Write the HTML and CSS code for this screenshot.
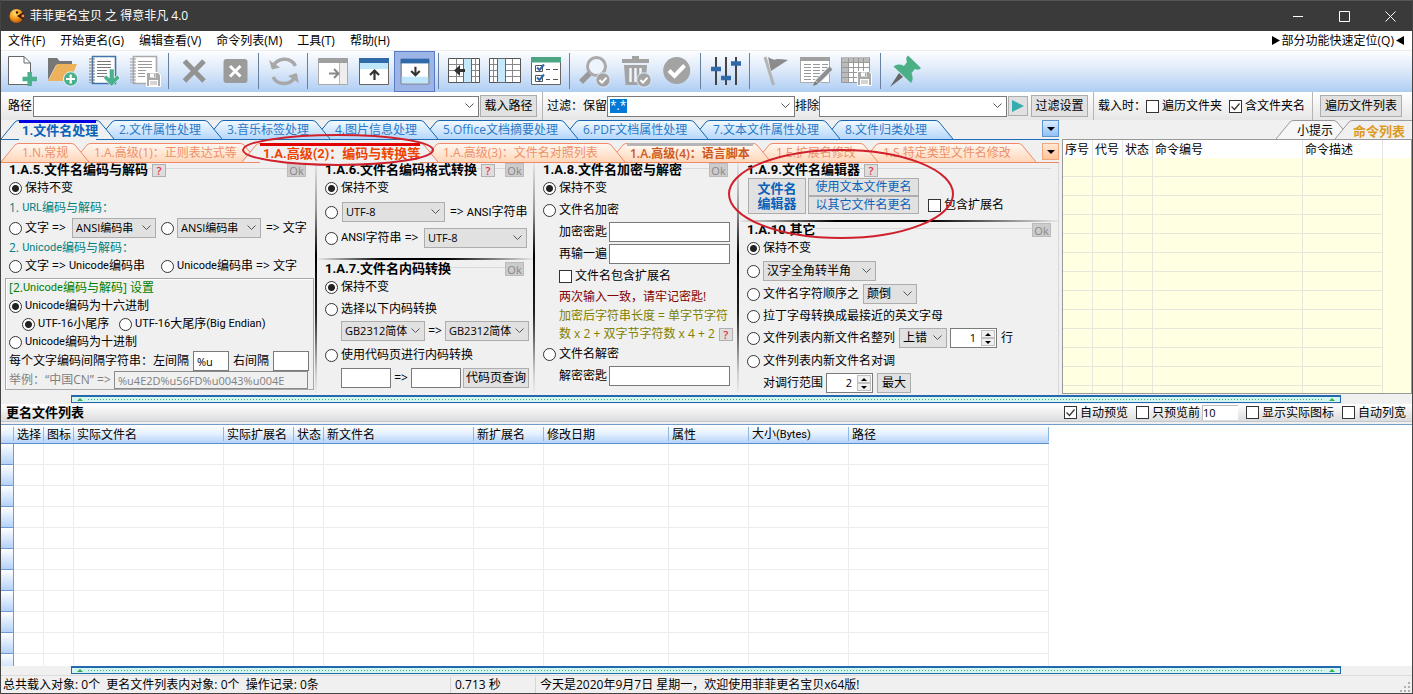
FILE: index.html
```html
<!DOCTYPE html>
<html lang="zh-CN">
<head>
<meta charset="utf-8">
<title>菲菲更名宝贝 之 得意非凡 4.0</title>
<link rel="stylesheet" href="styles.css">
</head>
<body>
<svg class="defs" aria-hidden="true">
  <defs>
    <linearGradient id="g-blue" x1="0" y1="0" x2="0" y2="1"><stop offset="0" stop-color="#f4faff"/><stop offset="1" stop-color="#b5d6fb"/></linearGradient>
    <linearGradient id="g-orange" x1="0" y1="0" x2="0" y2="1"><stop offset="0" stop-color="#fff8f2"/><stop offset="1" stop-color="#ffd6b8"/></linearGradient>
    <radialGradient id="g-ball" cx=".4" cy=".3" r=".8"><stop offset="0" stop-color="#ffe27a"/><stop offset=".5" stop-color="#f59a1c"/><stop offset="1" stop-color="#a84404"/></radialGradient>
    <symbol id="tab-l" viewBox="0 0 18 19"><path stroke="none" d="M0 19L14 2Q15.500 .5 18 .5V19Z"/><path fill="none" d="M0 19L14 2Q15.500 .5 18 .5"/></symbol>
    <symbol id="tab-r" viewBox="0 0 18 19"><path stroke="none" d="M0 .5Q2.500 .5 4 2L18 19H0Z"/><path fill="none" d="M0 .5Q2.500 .5 4 2L18 19"/></symbol>
    <symbol id="floppy" viewBox="0 0 15 15"><path fill="#a9a9a9" stroke="#fff" d="M.5 .5H12L14.500 3V14.500H.5Z"/><path fill="#fff" d="M4 1.500h6v4H4zM3 8h9v6H3z"/><path fill="#a9a9a9" d="M8 2h1.500v3H8zM4 9.500h7v1H4zM4 11.500h7v1H4z"/></symbol>
    <symbol id="badge" viewBox="0 0 16 16"><circle cx="8" cy="8" r="7.200" fill="#a3a3a3" stroke="#dce9f8"/><path fill="none" stroke="#fff" stroke-width="2" d="M4.500 8l2.500 2.600 4.500-5"/></symbol>
  </defs>
</svg>

<header class="titlebar">
  <svg class="logo" viewBox="0 0 16 16" width="16" height="16"><circle cx="7.500" cy="8" r="7" fill="url(#g-ball)"/><path fill="#3a1a06" d="M8 8L14.500 4V12Z"/><circle cx="8" cy="4.500" r="1.200" fill="#301000"/><circle cx="13.800" cy="8" r="1.400" fill="#ff8a4a"/></svg>
  <h1 class="app-name">菲菲更名宝贝 之 得意非凡 4.0</h1>
  <button class="winbtn" aria-label="最小化"><svg width="11" height="11"><path d="M0 5.500H10"/></svg></button>
  <button class="winbtn" aria-label="最大化"><svg width="11" height="11"><path d="M.5 .5H10.500V10.500H.5Z"/></svg></button>
  <button class="winbtn" aria-label="关闭"><svg width="11" height="11"><path d="M.5 .5L10.500 10.500M10.500 .5L.5 10.500"/></svg></button>
</header>

<nav class="menu">
  <button>文件(F)</button><button>开始更名(G)</button><button>编辑查看(V)</button><button>命令列表(M)</button><button>工具(T)</button><button>帮助(H)</button>
  <button class="quick"><svg width="8" height="9"><path d="M0 0L8 4.500L0 9Z"/></svg>部分功能快速定位(Q)<svg width="8" height="9"><path d="M8 0L0 4.500L8 9Z"/></svg></button>
</nav>

<div class="toolbar">
  <button aria-label="新建"><svg viewBox="0 0 41 41"><path fill="#fff" stroke="#666" d="M7.500 5.500H23L29.500 12V33.500H7.500Z"/><path fill="none" stroke="#666" d="M23 5.500V12H29.500"/><path stroke="#4cb08c" stroke-width="4.500" d="M28.700 21V35M21.500 28H36"/></svg></button>
  <button aria-label="打开"><svg viewBox="0 0 41 41"><path fill="#777" d="M6 7H15L17.500 10H30V14H14L6 29Z"/><path fill="#eeb25c" d="M15 13H35L28 30H6Z"/><circle cx="28.700" cy="28" r="7.200" fill="#4cb08c" stroke="#e8f2fc"/><path stroke="#fff" stroke-width="2.200" d="M28.700 23.500V32.500M24 28H33"/></svg></button>
  <button aria-label="载入列表"><svg viewBox="0 0 41 41"><path fill="#fff" stroke="#3f74ad" stroke-width="1.600" d="M9.500 5.500H32.500V32.500H9.500Z"/><path stroke="#777" d="M14 10.500H28M14 13.500H28M14 16.500H28M14 19.500H24M14 22.500H24M14 25.500H24"/><path stroke="#777" stroke-dasharray="1 2" stroke-width="6" d="M9 7.500V32"/><path fill="#4cb08c" stroke="#fff" stroke-width=".6" d="M26.300 18H31.200V27L34.200 24L37 27L28.700 35.500L20.500 27L23.200 24L26.300 27Z"/></svg></button>
  <button aria-label="保存列表"><svg viewBox="0 0 41 41"><path fill="#fff" stroke="#aaa" stroke-width="1.600" d="M9.500 5.500H32.500V32.500H9.500Z"/><path stroke="#999" d="M14 10.500H28M14 13.500H28M14 16.500H28M14 19.500H22M14 22.500H21M14 25.500H21"/><path stroke="#999" stroke-dasharray="1 2" stroke-width="6" d="M9 7.500V32"/><use href="#floppy" x="22" y="21" width="15" height="15"/></svg></button>
  <i class="sep"></i>
  <button aria-label="移除"><svg viewBox="0 0 41 41"><path stroke="#939393" stroke-width="5" d="M11.500 10L31 30M31 10L11.500 30"/></svg></button>
  <button aria-label="清空"><svg viewBox="0 0 41 41"><rect x="9.500" y="8" width="24" height="24" rx="3" fill="#9b9b9b"/><path stroke="#fff" stroke-width="3" d="M16 15L26.500 25.500M26.500 15L16 25.500"/></svg></button>
  <i class="sep"></i>
  <button aria-label="刷新"><svg viewBox="0 0 41 41"><g fill="none" stroke="#a8a8a8" stroke-width="3.500"><path d="M9.500 17A12.500 12.500 0 0 1 32.500 15"/><path d="M33 23.500A12.500 12.500 0 0 1 10 26"/></g><path fill="#a8a8a8" d="M6 9L9 18.500L17 16.500ZM36 32L33.500 22L25 25Z"/></svg></button>
  <i class="sep"></i>
  <button aria-label="右侧栏"><svg viewBox="0 0 41 41"><path fill="#fff" stroke="#aaa" d="M6.500 8H35.500V33.500H6.500Z"/><path fill="#a0a0a0" d="M6 7H36V12H6Z"/><path fill="#eee" d="M28 12H35V33H28Z"/><path stroke="#bbb" d="M27.500 12V33"/><path fill="none" stroke="#888" stroke-width="2" d="M17 22.500H26M22 18L26.500 22.500L22 27"/></svg></button>
  <button aria-label="上方栏"><svg viewBox="0 0 41 41"><path fill="#fff" stroke="#666" d="M6.500 8H35.500V33.500H6.500Z"/><path fill="#2f69a8" d="M6 7H36V12H6Z"/><path fill="#bfe6fb" d="M7 12H35V18H7Z"/><path fill="none" stroke="#333" stroke-width="2.200" d="M21.500 29V20M17 24L21.500 19.500L26 24"/></svg></button>
  <button class="on" aria-label="下方栏"><svg viewBox="0 0 41 41"><path fill="#fff" stroke="#666" d="M6.500 8H35.500V33.500H6.500Z"/><path fill="#2f69a8" d="M6 7H36V12H6Z"/><path fill="#bfe6fb" d="M7 26H35V33H7Z"/><path fill="none" stroke="#333" stroke-width="2.200" d="M21.500 15.500V24M17 20L21.500 24.500L26 20"/></svg></button>
  <i class="sep"></i>
  <button aria-label="插入列"><svg viewBox="0 0 41 41"><path fill="#fff" stroke="#555" d="M5.500 7.500H36.500V31.500H5.500Z"/><path stroke="#888" d="M6 13.500H36M6 19.500H36M6 25.500H36M13.500 8V31M32.500 8V31"/><path fill="#c6e8fb" stroke="#666" d="M20.500 7.500H28.500V31.500H20.500Z"/><path fill="#333" d="M11 19.500L17 14V18H22V21H17V25Z"/></svg></button>
  <button aria-label="列设置"><svg viewBox="0 0 41 41"><path fill="#fff" stroke="#555" d="M5.500 7.500H36.500V31.500H5.500Z"/><path stroke="#888" d="M6 13.500H36M6 19.500H36M6 25.500H36M9.500 8V31M28.500 8V31"/><path fill="#c6e8fb" stroke="#666" d="M13.500 7.500H21.500V31.500H13.500Z"/></svg></button>
  <button aria-label="选项清单"><svg viewBox="0 0 41 41"><path fill="#fff" stroke="#666" d="M6.500 7H35.500V33.500H6.500Z"/><path fill="#4ba583" d="M6 6H36V11.500H6Z"/><path fill="none" stroke="#555" d="M10.500 14.500H17.500V20.500H10.500ZM10.500 24.500H17.500V30.500H10.500ZM21 18.500H25M28 18.500H33M21 28.500H25M28 28.500H33" /><path fill="none" stroke="#2f69a8" stroke-width="2" d="M12 16.500L14.500 19L19 13.500M12 26.500L14.500 29L19 23.500"/></svg></button>
  <i class="sep"></i>
  <button aria-label="查找"><svg viewBox="0 0 41 41"><path stroke="#999" stroke-width="5.500" d="M16 22L7 31"/><circle cx="22.500" cy="15.500" r="9" fill="#eef4fc" stroke="#aaa" stroke-width="3"/><use href="#badge" x="21" y="21" width="16" height="16"/></svg></button>
  <button aria-label="清理"><svg viewBox="0 0 41 41"><path fill="#a3a3a3" d="M7 8H17V5H24V8H34V12H7ZM9 14H32L30.500 34H10.500Z"/><path stroke="#eef4fc" stroke-width="2.500" d="M15.500 17V31M20.500 17V31M25.500 17V31"/><use href="#badge" x="21" y="21" width="16" height="16"/></svg></button>
  <button aria-label="执行"><svg viewBox="0 0 41 41"><circle cx="20.700" cy="19.500" r="13.500" fill="#a3a3a3"/><path fill="none" stroke="#fff" stroke-width="4" d="M13 19.500L18.500 25L28.500 14.500"/></svg></button>
  <i class="sep"></i>
  <button aria-label="参数"><svg viewBox="0 0 41 41"><path stroke="#444" stroke-width="2" d="M11 6V34M21 6V34M31 6V34"/><path stroke="#2f69a8" stroke-width="4.500" d="M6 18H16M16 27H26M26 12.500H36"/></svg></button>
  <i class="sep"></i>
  <button aria-label="标记"><svg viewBox="0 0 41 41"><path fill="#8b8b8b" d="M14 6Q20 10 23 8Q29 8 34 9L17 20Z"/><path stroke="#b4b4b4" stroke-width="3" d="M11 6L19.500 34"/></svg></button>
  <button aria-label="编辑列表"><svg viewBox="0 0 41 41"><path fill="#fff" stroke="#aaa" d="M5.500 6.500H34.500V31.500H5.500Z"/><path fill="#a0a0a0" d="M5 6H35V10H5Z"/><path stroke="#999" stroke-dasharray="7 2" d="M9 13.500H33M9 16.500H33M9 19.500H33M9 22.500H33M9 25.500H24M9 28.500H20"/><path stroke="#dfeaf8" stroke-width="6" d="M35 18L22 31"/><path stroke="#8f8f8f" stroke-width="4" d="M36 17L22 31"/><path fill="#777" d="M20 30L23 33L18 35Z"/></svg></button>
  <button aria-label="保存表格"><svg viewBox="0 0 41 41"><path fill="#fff" stroke="#999" d="M5.500 6.500H33.500V31.500H5.500Z"/><path fill="#bbb" d="M6 6H33V11H12V31H6Z"/><path stroke="#999" d="M6 11.500H33M6 16.500H33M6 21.500H33M6 26.500H33M12.500 7V31M17.500 7V31M22.500 7V31M27.500 7V31"/><use href="#floppy" x="21" y="20" width="15" height="15"/></svg></button>
  <i class="sep"></i>
  <button aria-label="置顶"><svg viewBox="0 0 41 41"><path fill="#666" d="M14 22L18 26L5 36Z"/><path fill="#4cb086" d="M23 4.500L36 17Q34 20 30 18L26.500 22Q29 28 26 32L8.500 15.500Q13 12 19 15L22 11Q20 7 23 4.500Z"/></svg></button>
</div>

<div class="pathbar">
  <label for="path">路径</label>
  <div class="combo combo-path"><input id="path" type="text"><button aria-label="展开路径"></button></div>
  <button class="btn">载入路径</button>
  <i class="vsep"></i>
  <label for="keep">过滤：保留</label>
  <div class="combo combo-f"><mark>*.*</mark><input id="keep" type="text"><button aria-label="展开保留"></button></div>
  <label for="drop">排除</label>
  <div class="combo combo-f"><input id="drop" type="text"><button aria-label="展开排除"></button></div>
  <button class="btn play" aria-label="应用过滤"><svg width="12" height="12"><path fill="#35acb0" d="M0 0L12 6L0 12Z"/></svg></button>
  <button class="btn">过滤设置</button>
  <i class="vsep"></i>
  <span>载入时：</span>
  <label><input type="checkbox">遍历文件夹</label>
  <label class="second"><input type="checkbox" checked>含文件夹名</label>
  <i class="vsep"></i>
  <button class="btn">遍历文件列表</button>
</div>

<main class="main">
  <section class="work">
    <div class="strip blue">
      <div class="tabs tabs-main">
        <button class="tab sel"><svg><use href="#tab-l"/></svg><span>1.文件名处理</span><svg><use href="#tab-r"/></svg></button>
        <button class="tab"><svg><use href="#tab-l"/></svg><span>2.文件属性处理</span><svg><use href="#tab-r"/></svg></button>
        <button class="tab"><svg><use href="#tab-l"/></svg><span>3.音乐标签处理</span><svg><use href="#tab-r"/></svg></button>
        <button class="tab"><svg><use href="#tab-l"/></svg><span>4.图片信息处理</span><svg><use href="#tab-r"/></svg></button>
        <button class="tab"><svg><use href="#tab-l"/></svg><span>5.Office文档摘要处理</span><svg><use href="#tab-r"/></svg></button>
        <button class="tab"><svg><use href="#tab-l"/></svg><span>6.PDF文档属性处理</span><svg><use href="#tab-r"/></svg></button>
        <button class="tab"><svg><use href="#tab-l"/></svg><span>7.文本文件属性处理</span><svg><use href="#tab-r"/></svg></button>
        <button class="tab"><svg><use href="#tab-l"/></svg><span>8.文件归类处理</span><svg><use href="#tab-r"/></svg></button>
      </div>
      <button class="more" aria-label="更多标签"></button>
    </div>
    <div class="strip orange">
      <div class="tabs tabs-sub">
        <button class="tab"><svg><use href="#tab-l"/></svg><span>1.N.常规</span><svg><use href="#tab-r"/></svg></button>
        <button class="tab"><svg><use href="#tab-l"/></svg><span>1.A.高级(1)：正则表达式等</span><svg><use href="#tab-r"/></svg></button>
        <button class="tab sel"><svg><use href="#tab-l"/></svg><span>1.A.高级(2)：编码与转换等</span><svg><use href="#tab-r"/></svg></button>
        <button class="tab"><svg><use href="#tab-l"/></svg><span>1.A.高级(3)：文件名对照列表</span><svg><use href="#tab-r"/></svg></button>
        <button class="tab script"><svg><use href="#tab-l"/></svg><span>1.A.高级(4)：语言脚本</span><svg><use href="#tab-r"/></svg></button>
        <button class="tab"><svg><use href="#tab-l"/></svg><span>1.E.扩展名修改</span><svg><use href="#tab-r"/></svg></button>
        <button class="tab"><svg><use href="#tab-l"/></svg><span>1.S.特定类型文件名修改</span><svg><use href="#tab-r"/></svg></button>
      </div>
      <button class="more" aria-label="更多子标签"></button>
    </div>

    <div class="panels">
      <div class="col ruled">
        <div class="head"><h2>1.A.5.文件名编码与解码</h2><button class="help">?</button><button class="ok" disabled>Ok</button></div>
        <div class="row r22"><label><input type="radio" name="a5" checked>保持不变</label></div>
        <div class="row r18 teal">1.&nbsp;<span class="lat">URL</span>编码与解码：</div>
        <div class="row r22"><label class="w63"><input type="radio" name="a5">文字 =&gt;</label><select class="w84" aria-label="编码为"><option>ANSI编码串</option></select><label class="gap5"><input type="radio" name="a5" aria-label="解码自"></label><select class="w84" aria-label="解码自格式"><option>ANSI编码串</option></select><span class="gap5">=&gt; 文字</span></div>
        <div class="row r18 teal">2.&nbsp;<span class="lat">Unicode</span>编码与解码：</div>
        <div class="row r18"><label class="w152"><input type="radio" name="a5">文字 =&gt;&nbsp;<span class="lat">Unicode</span>编码串</label><label><input type="radio" name="a5"><span class="lat">Unicode</span>编码串 =&gt; 文字</label></div>
        <div class="setbox">
          <div class="row r18 green">[2.<span class="lat">Unicode</span>编码与解码] 设置</div>
          <div class="row r18"><label><input type="radio" name="base" checked><span class="lat">Unicode</span>编码为十六进制</label></div>
          <div class="row r18 in"><label class="w97"><input type="radio" name="end" checked><span class="lat">UTF-16</span>小尾序</label><label><input type="radio" name="end"><span class="lat">UTF-16</span>大尾序<span class="lat">(Big Endian)</span></label></div>
          <div class="row r18"><label><input type="radio" name="base"><span class="lat">Unicode</span>编码为十进制</label></div>
          <div class="row r20"><label for="lsep">每个文字编码间隔字符串：左间隔</label><input class="txt w36 gap4" id="lsep" type="text" value="%u"><label class="gap4" for="rsep">右间隔</label><input class="txt w36 gap4" id="rsep" type="text"></div>
          <div class="row r18 gray"><label class="w105" for="demo">举例：“中国CN” =&gt;</label><input class="txt demo" id="demo" type="text" value="%u4E2D%u56FD%u0043%u004E" disabled></div>
        </div>
      </div>

      <div class="col ruled">
        <div class="head"><h2>1.A.6.文件名编码格式转换</h2><button class="help">?</button><button class="ok" disabled>Ok</button></div>
        <div class="row r22"><label><input type="radio" name="a6" checked>保持不变</label></div>
        <div class="row r26"><label class="w17"><input type="radio" name="a6" aria-label="转为ANSI"></label><select class="w103" aria-label="源编码"><option>UTF-8</option></select><span class="gap5">=&gt; <span class="lat">ANSI</span>字符串</span></div>
        <div class="row r26"><label class="w99"><input type="radio" name="a6"><span class="lat">ANSI</span>字符串 =&gt;</label><select class="w103" aria-label="目标编码"><option>UTF-8</option></select></div>
        <hr class="rule">
        <div class="head"><h2>1.A.7.文件名内码转换</h2><button class="ok" disabled>Ok</button></div>
        <div class="row r22"><label><input type="radio" name="a7" checked>保持不变</label></div>
        <div class="row r22"><label><input type="radio" name="a7">选择以下内码转换</label></div>
        <div class="row r22 in"><select class="w84" aria-label="源内码"><option>GB2312简体</option></select><span class="arrow">=&gt;</span><select class="w84" aria-label="目标内码"><option>GB2312简体</option></select></div>
        <div class="row r26"><label><input type="radio" name="a7">使用代码页进行内码转换</label></div>
        <div class="row r20 in"><input class="txt w50" type="text" aria-label="源代码页"><span class="arrow">=&gt;</span><input class="txt w50" type="text" aria-label="目标代码页"><button class="btn small">代码页查询</button></div>
      </div>

      <div class="col ruled">
        <div class="head"><h2>1.A.8.文件名加密与解密</h2><button class="ok" disabled>Ok</button></div>
        <div class="row r22"><label><input type="radio" name="a8" checked>保持不变</label></div>
        <div class="row r22"><label><input type="radio" name="a8">文件名加密</label></div>
        <div class="row r22 in"><label class="w50" for="key1">加密密匙</label><input class="txt w121" id="key1" type="text"></div>
        <div class="row r22 in"><label class="w50" for="key2">再输一遍</label><input class="txt w121" id="key2" type="text"></div>
        <div class="row r22 in"><label><input type="checkbox">文件名包含扩展名</label></div>
        <div class="row r20 in red">两次输入一致，请牢记密匙!</div>
        <div class="row r18 in olive">加密后字符串长度 = 单字节字符</div>
        <div class="row r18 in olive">数 x 2 + 双字节字符数 x 4 + 2<button class="help">?</button></div>
        <div class="row r22"><label><input type="radio" name="a8">文件名解密</label></div>
        <div class="row r22 in"><label class="w50" for="key3">解密密匙</label><input class="txt w121" id="key3" type="text"></div>
      </div>

      <div class="col last">
        <div class="head"><h2>1.A.9.文件名编辑器</h2><button class="help">?</button></div>
        <div class="editor">
          <button class="btn big">文件名<br>编辑器</button>
          <div class="stack"><button class="btn link">使用文本文件更名</button><button class="btn link">以其它文件名更名</button></div>
          <label class="ext"><input type="checkbox">包含扩展名</label>
        </div>
        <hr class="rule">
        <div class="head"><h2>1.A.10.其它</h2><button class="ok" disabled>Ok</button></div>
        <div class="row r22"><label><input type="radio" name="a10" checked>保持不变</label></div>
        <div class="row r24"><label class="w16"><input type="radio" name="a10" aria-label="全半角转换"></label><select class="w113 wide" aria-label="全半角"><option>汉字全角转半角</option></select></div>
        <div class="row r22"><label><input type="radio" name="a10">文件名字符顺序之</label><select class="w54 wide gap4" aria-label="顺序"><option>颠倒</option></select></div>
        <div class="row r22"><label><input type="radio" name="a10">拉丁字母转换成最接近的英文字母</label></div>
        <div class="row r22"><label><input type="radio" name="a10">文件列表内新文件名整列</label><select class="w48 wide gap4" aria-label="方向"><option>上错</option></select><span class="spin"><input type="text" value="1" aria-label="行数"><span><button aria-label="增加"></button><button aria-label="减少"></button></span></span><span class="gap4">行</span></div>
        <div class="row r24"><label><input type="radio" name="a10">文件列表内新文件名对调</label></div>
        <div class="row r20 in"><label for="range">对调行范围</label><span class="spin"><input id="range" type="text" value="2"><span><button aria-label="增加"></button><button aria-label="减少"></button></span></span><button class="btn small max gap4">最大</button></div>
      </div>
    </div>
  </section>

  <aside class="cmds">
    <div class="ctabs">
      <button class="tab"><svg><use href="#tab-l"/></svg><span>小提示</span><svg class="end"><use href="#tab-r"/></svg></button>
      <button class="tab cur"><svg><use href="#tab-l"/></svg><span>命令列表</span></button>
    </div>
    <div class="cbox">
      <table class="ctable">
        <thead><tr><th class="c30">序号</th><th class="c30">代号</th><th class="c30">状态</th><th class="c150">命令编号</th><th class="c80">命令描述</th></tr></thead>
        <tbody>
          <tr><td></td><td></td><td></td><td></td><td></td></tr><tr><td></td><td></td><td></td><td></td><td></td></tr><tr><td></td><td></td><td></td><td></td><td></td></tr><tr><td></td><td></td><td></td><td></td><td></td></tr><tr><td></td><td></td><td></td><td></td><td></td></tr><tr><td></td><td></td><td></td><td></td><td></td></tr><tr><td></td><td></td><td></td><td></td><td></td></tr><tr><td></td><td></td><td></td><td></td><td></td></tr><tr><td></td><td></td><td></td><td></td><td></td></tr><tr><td></td><td></td><td></td><td></td><td></td></tr><tr><td></td><td></td><td></td><td></td><td></td></tr><tr><td></td><td></td><td></td><td></td><td></td></tr><tr><td></td><td></td><td></td><td></td><td></td></tr>
        </tbody>
      </table>
    </div>
  </aside>
</main>

<div class="splitter"><i></i><b></b><i></i></div>

<div class="listbar">
  <h2>更名文件列表</h2>
  <label><input type="checkbox" checked>自动预览</label>
  <label><input type="checkbox">只预览前</label><input class="count" type="text" value="10" aria-label="预览数量">
  <label><input type="checkbox">显示实际图标</label>
  <label><input type="checkbox">自动列宽</label>
</div>

<div class="files">
  <table class="ftable">
    <thead><tr><th class="f14"></th><th class="c30">选择</th><th class="c30">图标</th><th class="c150">实际文件名</th><th class="f70">实际扩展名</th><th class="c30">状态</th><th class="c150">新文件名</th><th class="f70">新扩展名</th><th class="f125">修改日期</th><th class="c80">属性</th><th class="f100">大小<span class="lat">(Bytes)</span></th><th class="f200">路径</th></tr></thead>
    <tbody>
      <tr><th></th><td></td><td></td><td></td><td></td><td></td><td></td><td></td><td></td><td></td><td></td><td></td></tr>
      <tr><th></th><td></td><td></td><td></td><td></td><td></td><td></td><td></td><td></td><td></td><td></td><td></td></tr>
      <tr><th></th><td></td><td></td><td></td><td></td><td></td><td></td><td></td><td></td><td></td><td></td><td></td></tr>
      <tr><th></th><td></td><td></td><td></td><td></td><td></td><td></td><td></td><td></td><td></td><td></td><td></td></tr>
      <tr><th></th><td></td><td></td><td></td><td></td><td></td><td></td><td></td><td></td><td></td><td></td><td></td></tr>
      <tr><th></th><td></td><td></td><td></td><td></td><td></td><td></td><td></td><td></td><td></td><td></td><td></td></tr>
      <tr><th></th><td></td><td></td><td></td><td></td><td></td><td></td><td></td><td></td><td></td><td></td><td></td></tr>
      <tr><th></th><td></td><td></td><td></td><td></td><td></td><td></td><td></td><td></td><td></td><td></td><td></td></tr>
      <tr><th></th><td></td><td></td><td></td><td></td><td></td><td></td><td></td><td></td><td></td><td></td><td></td></tr>
      <tr><th></th><td></td><td></td><td></td><td></td><td></td><td></td><td></td><td></td><td></td><td></td><td></td></tr>
      <tr><th></th><td></td><td></td><td></td><td></td><td></td><td></td><td></td><td></td><td></td><td></td><td></td></tr>
    </tbody>
  </table>
</div>

<div class="splitter"><i></i><b></b><i></i></div>

<footer class="status">
  <span class="s1">总共载入对象: 0个&nbsp; 更名文件列表内对象: 0个&nbsp; 操作记录: 0条</span>
  <span class="s2">0.713 秒</span>
  <span class="s3">今天是2020年9月7日 星期一，欢迎使用菲菲更名宝贝x64版!</span>
  <svg class="grip" width="12" height="12"><path stroke="#b0b0b0" stroke-width="2" stroke-dasharray="2 2" d="M9 1V12M5 5V12M1 9V12"/></svg>
</footer>

<svg class="marks" aria-hidden="true"><ellipse cx="338" cy="150" rx="95" ry="15"/><ellipse cx="841" cy="194" rx="112" ry="44"/></svg>
</body>
</html>
```
FILE: styles.css
```css
* { box-sizing: border-box; }
body {
  margin: 0;
  height: 100vh;
  display: flex;
  flex-direction: column;
  overflow: hidden;
  position: relative;
  font: 12px/16px "Open Sans", "Noto Sans CJK SC", sans-serif;
  color: #000;
  background: #f0f0f0;
  border: solid #444;
  border-width: 0 1px 1px;
  white-space: nowrap;
}
button, input, select { font: inherit; color: inherit; margin: 0; padding: 0; border-radius: 0; }
button { border: 0; background: none; white-space: nowrap; }
h1, h2 { margin: 0; font-size: 13px; line-height: 14px; }
h2 { font-family: Roboto, "Noto Sans CJK SC", sans-serif; }
table { border-collapse: separate; border-spacing: 0; table-layout: fixed; }
th { font-weight: normal; text-align: left; padding: 0; }
td { padding: 0; }
.defs { position: absolute; width: 0; height: 0; }
.lat { font-family: Roboto, "Noto Sans CJK SC", sans-serif; font-size: 11px; }

/* title bar */
.titlebar { height: 31px; flex: none; display: flex; align-items: center; background: #3a3a3a; color: #fff; border-top: 1px solid #555; margin: 0 -1px; padding-left: 9px; }
.app-name { flex: 1; margin-left: 5px; font-size: 12px; line-height: 16px; font-weight: normal; }
.winbtn { width: 46px; height: 30px; }
.winbtn svg { display: block; margin: auto; fill: none; stroke: #fff; }

/* menu */
.menu { height: 20px; flex: none; display: flex; gap: 15px; padding: 0 8px 0 7px; background: #fff; border-bottom: 1px solid #ececec; }
.quick { margin-left: auto; display: flex; gap: 2px; align-items: center; }

/* tool bar */
.toolbar { height: 41px; flex: none; display: flex; background: linear-gradient(#fcfdff, #dbe8f9 50%, #aecdf3); }
.toolbar button { width: 41px; height: 41px; }
.toolbar svg { display: block; width: 100%; height: 100%; }
.toolbar .on { background: #9db4e6; border: 1px solid #5a7cc4; }
.sep { width: 8px; background: linear-gradient(#67809f, #67809f) 3px 2px / 1px 36px no-repeat; }

/* path bar */
.pathbar { height: 28px; flex: none; display: flex; align-items: center; padding: 0 10px 0 7px; background: linear-gradient(#fff, #e6e6e6); }
.combo { display: flex; height: 21px; background: #fff; border: 1px solid #7a7a7a; }
.combo-path { flex: 1; margin: 0 1px; }
.combo-f { width: 188px; }
.combo input { flex: 1; min-width: 0; border: 0; background: none; outline: 0; }
.combo button { width: 17px; }
.combo mark { margin: 2px; background: #0078d7; color: #fff; line-height: 14px; height: 14px; width: 17px; }
.combo button, select { background: url("data:image/svg+xml,%3Csvg xmlns='http://www.w3.org/2000/svg' width='9' height='6'%3E%3Cpath d='M.5 .5L4.500 4.500L8.500 .5' fill='none' stroke='%23555'/%3E%3C/svg%3E") right 4px center no-repeat; }
.btn { height: 22px; padding: 0 3px; background: #e1e1e1; border: 1px solid #adadad; line-height: 16px; display: flex; align-items: center; justify-content: center; }
.pathbar .btn { width: 57px; }
.pathbar .btn:last-child { width: 82px; }
.pathbar .play { width: 20px; height: 20px; margin: 0 3px 0 1px; }
.vsep { width: 1px; height: 28px; margin: 0 4px 0 5px; background: #b5b5b5; }
.second { margin-left: 7px; }
.pathbar .vsep:nth-last-child(2) { margin: 0 7px; }

label { display: inline-flex; align-items: center; flex: none; }
input[type="checkbox"], input[type="radio"] { appearance: none; width: 13px; height: 13px; flex: none; margin-right: 3px; background: #fff; border: 1px solid #333; }
input[type="radio"] { border-radius: 50%; }
input[type="radio"]:checked { background: radial-gradient(circle, #222 3px, #fff 4px); }
input[type="checkbox"]:checked { background: #fff url("data:image/svg+xml,%3Csvg xmlns='http://www.w3.org/2000/svg' width='11' height='11'%3E%3Cpath d='M1.500 5.500L4.500 8.500L9.500 2.500' fill='none' stroke='%23333' stroke-width='1.200'/%3E%3C/svg%3E") center no-repeat; }
select { appearance: none; flex: none; height: 20px; padding: 0 3px; background-color: #e1e1e1; border: 1px solid #adadad; font-size: 11px; line-height: 18px; }
.wide { font-size: 12px; }

/* upper area */
.main { flex: none; display: flex; gap: 3px; background: #f0f0f0; }
.work { flex: 1; min-width: 0; }
.strip { display: flex; justify-content: space-between; border-bottom: 1px solid; height: 20px; }
.strip.blue { border-color: #1c6cb8; margin-bottom: 3px; }
.strip.orange { border-color: #f08868; }
.tabs { display: grid; flex: none; }
.tabs-main { grid-template-columns: 97px 108px 108px 108px 140px 130px 132px 113px; }
.tabs-sub { grid-template-columns: 72px 169px 180px 187px 146px 107px 158px; }
.tab { display: flex; height: 19px; width: calc(100% + 16px); position: relative; text-align: left; }
.tab svg { width: 18px; height: 19px; flex: none; display: block; }
.tab span { flex: 1; min-width: 0; padding-left: 3px; line-height: 18px; border-top: 1px solid; white-space: nowrap; }
.tab:nth-child(1) { z-index: 8; }
.tab:nth-child(2) { z-index: 7; }
.tab:nth-child(3) { z-index: 6; }
.tab:nth-child(4) { z-index: 5; }
.tab:nth-child(5) { z-index: 4; }
.tab:nth-child(6) { z-index: 3; }
.tab:nth-child(7) { z-index: 2; }
.blue .tab svg { fill: url(#g-blue); stroke: #1466b0; }
.blue .tab span { color: #2a7ac8; background: linear-gradient(#f4faff, #b5d6fb); border-color: #1466b0; }
.orange .tab svg { fill: url(#g-orange); stroke: #f08868; }
.orange .tab span { color: #ee9068; background: linear-gradient(#fff8f2, #ffd6b8); border-color: #f08868; }
.strip .sel { z-index: 9; height: 20px; }
.strip .sel svg { fill: #f0f0f0; }
.strip .sel span { position: relative; z-index: 1; background: #f0f0f0; font-family: Roboto, "Noto Sans CJK SC", sans-serif; font-size: 13px; font-weight: bold; line-height: 16px; border-top-width: 3px; }
.blue .sel span { color: #0a62b8; border-color: #0000e0; }
.orange .sel span { color: #ee4400; border-color: #e00000; }
.orange .script span { color: #cc5a20; font-weight: 600; border-top: 3px solid #b5b5b5; line-height: 16px; }
.more { width: 17px; height: 17px; border: 1px solid #5c94cf; background: linear-gradient(#dcecff, #8fc0f6); display: grid; place-items: center; }
.more::after { content: ""; border: 4px solid transparent; border-top-color: #000; border-bottom: 0; }
.orange .more { border-color: #f0a880; background: linear-gradient(#ffe8d4, #ffc497); }

/* option panels */
.panels { display: grid; grid-template-columns: 317px 218px 204px 1fr; min-height: 232px; }
.ruled { background: linear-gradient(#e4e4e4, #999 20%, #000 40%, #222 65%, #ccc 90%, #f0f0f0) right 1px top 0 / 2px 100% no-repeat; }
.col { padding-left: 7px; }
.col:first-child { padding-left: 8px; }
.last { border-right: 1px solid #d8d8d8; }
.head { height: 14px; display: flex; align-items: center; margin-right: 12px; background: linear-gradient(#d9d9d9, #d9d9d9) 0 5px / 100% 1px no-repeat; }
.last .head { margin-right: 7px; }
.head h2 { background: #f0f0f0; }
.help { width: 14px; height: 13px; margin-left: 4px; background: #dedede; border: 1px solid #b0b0b0; color: #e83040; font-size: 11px; line-height: 11px; font-weight: 600; }
.ok { width: 19px; height: 14px; margin-left: auto; background: #ccc; border: 1px solid #bbb; color: #888; font-size: 11px; line-height: 11px; }
.row { display: flex; align-items: center; }
.r18 { height: 18px; }
.r20 { height: 20px; }
.r22 { height: 22px; }
.r24 { height: 24px; }
.r26 { height: 26px; }
.in { padding-left: 16px; }
.setbox { margin: 3px 4px 0 -4px; padding-left: 3px; border: 1px solid #a8a8a8; box-shadow: inset 1px 1px #fff; }
.setbox .in { padding-left: 13px; }
.txt { height: 20px; border: 1px solid #7a7a7a; background: #fff; padding: 0 3px; font-size: 11px; }
.demo { flex: 1; min-width: 0; height: 18px; margin-right: 5px; background: #f0f0f0; border-color: #8a8a8a; color: #808080; }
.w16 { width: 16px; }
.w17 { width: 17px; }
.w36 { width: 36px; }
.w48 { width: 48px; }
.w50 { width: 50px; }
.w54 { width: 54px; }
.w63 { width: 63px; }
.w84 { width: 84px; }
.w97 { width: 97px; }
.w99 { width: 99px; }
.w103 { width: 103px; }
.w105 { width: 105px; }
.w113 { width: 113px; }
.w121 { width: 121px; }
.w152 { width: 152px; }
.gap4 { margin-left: 4px; }
.gap5 { margin-left: 5px; }
.arrow { width: 20px; text-align: center; }
.teal { color: #008080; }
.green { color: #008000; }
.gray { color: #808080; }
.red { color: #800000; }
.olive { color: #808000; }
.rule { border: 0; height: 2px; margin: 7px 3px 2px -7px; background: linear-gradient(90deg, #e8e8e8, #000 30%, #000 60%, #e8e8e8); }
.last .rule { margin: 6px 0 1px -7px; }
.small { height: 20px; margin-left: 2px; padding: 0 2px; }
.max { width: 34px; margin-left: 4px; }
.editor { display: flex; gap: 2px; padding: 1px; height: 37px; }
.stack { display: flex; flex-direction: column; }
.big { width: 58px; height: 36px; line-height: 15px; font-size: 13px; font-weight: bold; color: #0a62b8; }
.link { width: 111px; height: 18px; color: #0a62b8; }
.ext { align-self: flex-end; margin-left: 7px; }
.spin { display: flex; width: 47px; height: 20px; margin-left: 3px; background: #fff; border: 1px solid #7a7a7a; }
.spin input { flex: 1; min-width: 0; border: 0; background: none; text-align: right; padding-right: 4px; font-size: 11px; }
.spin > span { display: grid; width: 16px; padding: 1px; }
.spin button { display: grid; place-items: center; background: #f0f0f0; border: 1px solid #c0c0c0; }
.spin button::after { content: ""; border: 3px solid transparent; border-bottom-color: #000; border-top: 0; }
.spin button:last-child::after { transform: rotate(180deg); }

/* command list */
.cmds { flex: none; width: 350px; display: flex; flex-direction: column; }
.ctabs { height: 19px; display: flex; justify-content: flex-end; }
.ctabs .tab { width: auto; margin-left: -8px; }
.ctabs .tab span { border-color: #999; background: #f7f7f7; flex: none; line-height: 20px; }
.ctabs .tab svg { fill: #f7f7f7; stroke: #999; }
.ctabs .end { margin-right: -8px; }
.ctabs .cur { z-index: 9; }
.ctabs .cur span { color: #dd9a1c; font-weight: bold; font-size: 13px; padding: 0 7px 0 0; background: #f0f0f0; }
.ctabs .cur svg { fill: #f0f0f0; }
.cbox { height: 255px; overflow: hidden; background: linear-gradient(#fff, #fff) 0 0 / 100% 18px no-repeat #ffffe1; border: 1px solid #999; }
.ctable { width: 320px; }
.ctable thead tr { height: 18px; }
.ctable th { border-right: 1px solid #e4e4e4; background: #fff; padding-left: 2px; line-height: 17px; }
.ctable td { height: 19px; border: solid #e6e6da; border-width: 0 1px 1px 0; }
.c30 { width: 30px; }
.c80 { width: 80px; }
.c150 { width: 150px; }
.f14 { width: 13px; }
.f70 { width: 70px; }
.f100 { width: 100px; }
.f125 { width: 125px; }
.f200 { width: 200px; }

.splitter { flex: none; height: 8px; margin: 0 71px 1px 70px; display: flex; align-items: center; justify-content: space-between; gap: 5px; padding: 0 5px; background: #d4f6ee; border: solid #2268ac; border-width: 2px 1px 1px; }
.splitter i { border: 3px solid transparent; border-bottom-color: #35b050; border-top: 0; }
.splitter b { flex: 1; height: 1px; background: repeating-linear-gradient(90deg, #3aa878 0 1px, transparent 1px 3px); }

/* file list */
.listbar { flex: none; height: 18px; display: flex; align-items: center; gap: 8px; padding: 0 6px 0 5px; background: linear-gradient(#fff, #dcdcdc); border-bottom: 1px solid #c0c8d0; }
.listbar h2 { margin-right: auto; }
.count { width: 36px; height: 15px; margin-left: -6px; border: 1px solid #bbb; border-width: 1px 0 0 1px; background: #fff; font-size: 11px; }
.files { flex: 1; min-height: 0; overflow: hidden; margin-top: 2px; background: #fff; border-top: 1px solid #6f9cc9; }
.ftable { width: 1048px; }
.ftable thead th { height: 18px; background: linear-gradient(90deg, #8db8e6, #8db8e6) right 2px / 1px 14px no-repeat, linear-gradient(#fff, #e4f0fe 50%, #b4d2fa); border-bottom: 1px solid #5f8fc8; padding-left: 3px; line-height: 17px; }
.ftable td { height: 21px; border: solid #ececec; border-width: 0 1px 1px 0; }
.ftable tbody th { border: solid #6f9cd6; border-width: 0 1px 1px 0; background: linear-gradient(#fff, #b4d2fa); }

/* status bar */
.status { flex: none; height: 18px; display: flex; align-items: center; border-top: 1px solid #dcdcdc; padding-left: 2px; }
.status span { padding-right: 5px; }
.s1 { width: 448px; border-right: 1px solid #d4d4d4; }
.s2 { width: 85px; padding-left: 4px; border-right: 1px solid #d4d4d4; }
.s3 { padding-left: 4px; flex: 1; }
.grip { align-self: flex-end; }

.marks { position: absolute; z-index: 20; top: 0; left: -1px; width: 960px; height: 250px; fill: none; stroke: #d0202c; stroke-width: 2; pointer-events: none; }
```
